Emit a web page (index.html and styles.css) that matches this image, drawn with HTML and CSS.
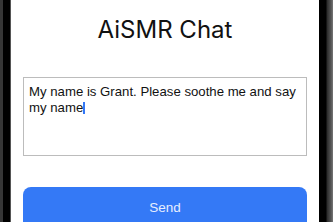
FILE: index.html
```html
<!DOCTYPE html>
<html lang="en">
<head>
    <meta charset="UTF-8">
    <meta name="viewport" content="width=device-width, initial-scale=1.0">
    <title>AiSMR Chat</title>
    <link rel="stylesheet" href="styles.css">
</head>
<body>
    <div class="device">
        <div class="screen">
            <h1 class="title">AiSMR Chat</h1>
            <div class="message-box">
                <span class="message">My name is Grant. Please soothe me and say my name</span><span class="caret"></span>
            </div>
            <button class="send-button">Send</button>
        </div>
    </div>
</body>
</html>
```

FILE: styles.css
```css
html, body {
    margin: 0;
    height: 100%;
    overflow: hidden;
}
body {
    font-family: "Liberation Sans", Arial, sans-serif;
    background-color: #000;
}
.device {
    display: flex;
    height: 100%;
    border-left: 3px solid #363636;
    background: linear-gradient(to right, #000 0, #000 318px, #000 323px, #2a2a2a 324px, #555 328px, #777 330px);
}
.screen {
    margin-left: 7px;
    width: 309px;
    border-left: 1px solid #555;
    background-color: #fff;
    padding: 0 12px;
    box-sizing: border-box;
}
.title {
    margin: 17px 0 0;
    text-align: center;
    font-family: Inter, "Liberation Sans", sans-serif;
    font-size: 24px;
    font-weight: 400;
    color: #111;
    line-height: 26px;
}
.message-box {
    margin-top: 34px;
    height: 79px;
    border: 1px solid #bcbcbc;
    padding: 6px 5px;
    box-sizing: border-box;
    font-size: 13.2px;
    line-height: 16px;
    color: #111;
}
.caret {
    display: inline-block;
    width: 2px;
    height: 12px;
    vertical-align: -2px;
    background-color: #3478f6;
}
.send-button {
    display: block;
    width: 100%;
    margin-top: 31px;
    height: 44px;
    padding: 0 0 3px;
    border: none;
    border-radius: 8px;
    background-color: #3479f6;
    color: #e6eefe;
    font-family: inherit;
    font-size: 13.5px;
}
```
